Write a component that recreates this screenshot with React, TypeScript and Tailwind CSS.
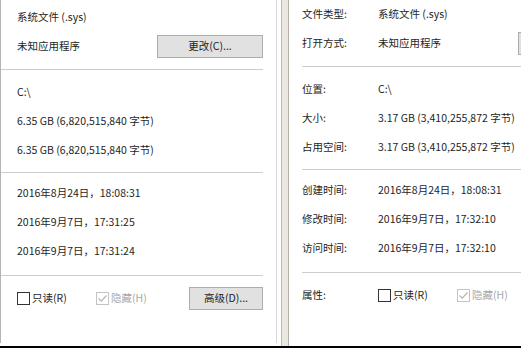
import type { ReactNode } from "react";

type SheetData = {
  size: string;
  created: string;
  modified: string;
  accessed: string;
};

const leftData: SheetData = {
  size: "6.35 GB (6,820,515,840 字节)",
  created: "2016年8月24日，18:08:31",
  modified: "2016年9月7日，17:31:25",
  accessed: "2016年9月7日，17:31:24",
};

const rightData: SheetData = {
  size: "3.17 GB (3,410,255,872 字节)",
  created: "2016年8月24日，18:08:31",
  modified: "2016年9月7日，17:32:10",
  accessed: "2016年9月7日，17:32:10",
};

function Field({ label, children }: { label?: string; children: ReactNode }) {
  return (
    <div className="flex h-[29px] items-center">
      {label !== undefined && <div className="w-[76px] shrink-0">{label}</div>}
      <div className="flex w-[246px] shrink-0 items-center">{children}</div>
    </div>
  );
}

function Rule({ labels, className }: { labels: boolean; className: string }) {
  return (
    <div
      className={`h-px shrink-0 bg-[#cdcdcd] ${labels ? "w-[322px]" : "-ml-[16px] w-[262px]"} ${className}`}
    />
  );
}

function Button({ children, className }: { children?: ReactNode; className: string }) {
  return (
    <div
      className={`flex h-[23px] shrink-0 items-center justify-center border border-[#adadad] bg-[#e1e1e1] ${className}`}
    >
      {children}
    </div>
  );
}

function Check({ text, disabled }: { text: string; disabled?: boolean }) {
  return (
    <div className={`flex items-center gap-[2px] ${disabled ? "text-[#a8a8a8]" : ""}`}>
      <span
        className={`flex h-[13px] w-[13px] items-center justify-center border bg-white ${
          disabled ? "border-[#c4c4c4]" : "border-[#333333]"
        }`}
      >
        {disabled && (
          <svg width="11" height="11" viewBox="0 0 11 11" fill="none">
            <path d="M1.5 5.5 L4.2 8.2 L9.5 2.5" stroke="#b4b4b4" strokeWidth="1.2" />
          </svg>
        )}
      </span>
      <span>{text}</span>
    </div>
  );
}

// the right sheet is cut at the window edge: only the rim of its first button shows
function Sheet({ data, labels }: { data: SheetData; labels: boolean }) {
  const l = (s: string) => (labels ? s : undefined);
  return (
    <div className="flex flex-col">
      <Field label={l("文件类型:")}>系统文件 (.sys)</Field>
      <Field label={l("打开方式:")}>
        <span className="flex-1">未知应用程序</span>
        <Button className="w-[106px]">{!labels && "更改(C)..."}</Button>
      </Field>
      <Rule labels={labels} className="mt-[8px] mb-[8px]" />
      <Field label={l("位置:")}>C:\</Field>
      <Field label={l("大小:")}>{data.size}</Field>
      <Field label={l("占用空间:")}>{data.size}</Field>
      <Rule labels={labels} className="mt-[7px] mb-[6px]" />
      <Field label={l("创建时间:")}>{data.created}</Field>
      <Field label={l("修改时间:")}>{data.modified}</Field>
      <Field label={l("访问时间:")}>{data.accessed}</Field>
      <Rule labels={labels} className="mt-[9px] mb-[8px]" />
      <Field label={l("属性:")}>
        <div className="w-[79px] shrink-0">
          <Check text="只读(R)" />
        </div>
        <div className={labels ? "shrink-0" : "w-[93px] shrink-0"}>
          <Check text="隐藏(H)" disabled />
        </div>
        {!labels && <Button className="w-[74px]">高级(D)...</Button>}
      </Field>
    </div>
  );
}

export default function App() {
  return (
    <div
      className="flex h-[348px] w-[521px] flex-col overflow-hidden bg-white text-[10.5px] leading-none text-[#1e1e1e]"
      style={{ fontFamily: '"Noto Sans CJK SC", "Noto Sans", sans-serif' }}
    >
      <div className="flex h-[346px]">
        <div className="h-[343px] w-[277px] shrink-0 overflow-hidden border-x border-l-[#b4b4b4] border-r-[#d6d6d6] pt-[3px] pl-[16px]">
          <Sheet data={leftData} labels={false} />
        </div>
        <div className="w-[4px] shrink-0" />
        <div className="w-[8px] shrink-0 border-x border-l-[#bdb9b1] border-r-[#b5b1a9] bg-[#ebe8e2]" />
        <div className="flex-1 overflow-hidden pl-[13px]">
          <Sheet data={rightData} labels />
        </div>
      </div>
      <div className="h-[2px] bg-black" />
    </div>
  );
}
